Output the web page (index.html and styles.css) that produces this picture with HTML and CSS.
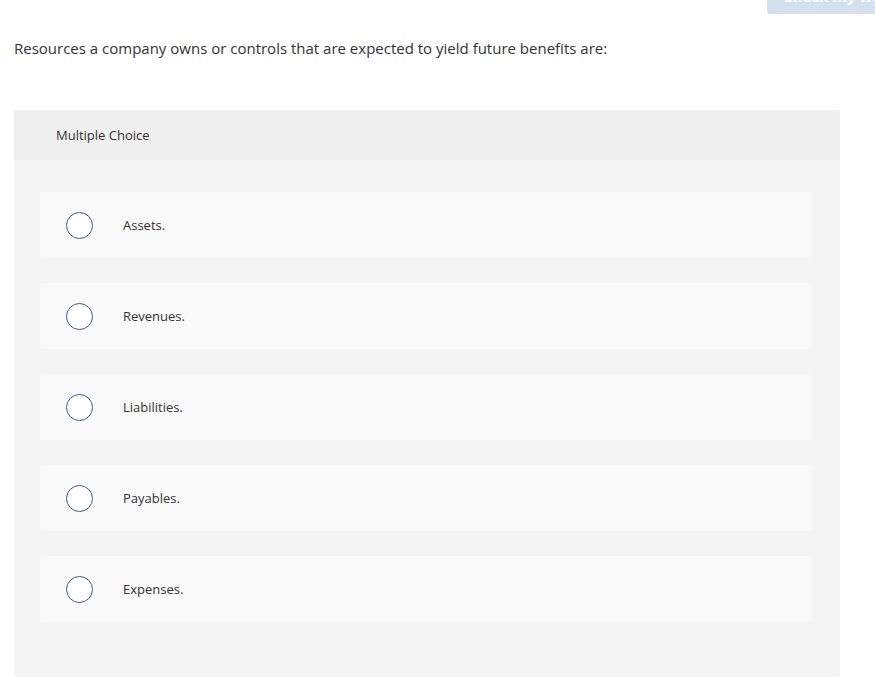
FILE: index.html
```html
<!DOCTYPE html>
<html>
<head>
<meta charset="utf-8">
<link rel="stylesheet" href="styles.css">
</head>
<body>
<div class="topbar"><button class="check-btn">Check my work</button></div>
<p class="question">Resources a company owns or controls that are expected to yield future benefits are:</p>
<div class="panel">
  <div class="panel-head">Multiple Choice</div>
  <div class="options">
    <label class="option"><span class="radio"></span><span class="label">Assets.</span></label>
    <label class="option"><span class="radio"></span><span class="label">Revenues.</span></label>
    <label class="option"><span class="radio"></span><span class="label">Liabilities.</span></label>
    <label class="option"><span class="radio"></span><span class="label">Payables.</span></label>
    <label class="option"><span class="radio"></span><span class="label">Expenses.</span></label>
  </div>
</div>
</body>
</html>
```
FILE: styles.css
```css
html, body { margin: 0; padding: 0; background: #fff; }
body { font-family: "Open Sans", "Liberation Sans", sans-serif; color: #333; width: 875px; height: 695px; overflow: hidden; }
.topbar { height: 0; display: flex; justify-content: flex-end; }
.check-btn {
  margin-top: -22px; margin-right: -20px; height: 36px; width: 128px;
  background: #d4e0ee; border: none; border-radius: 4px; color: #fff;
  font-family: "Open Sans", sans-serif; font-weight: 700; font-size: 15px; line-height: 18px;
  display: flex; align-items: flex-end; justify-content: flex-start; padding: 0 0 9px 16px; box-sizing: border-box;
  white-space: nowrap;
}
.question { margin: 0; padding: 38px 0 0 14px; font-size: 15px; line-height: 20px; }
.panel { margin: 52px 0 0 14px; width: 826px; height: 567px; background: #f4f4f4; border-radius: 3px; overflow: hidden; }
.panel-head { height: 50px; background: #f0f0f0; display: flex; align-items: center; padding-left: 42px; font-size: 13px; color: #333; }
.options { display: flex; flex-direction: column; gap: 25px; padding: 32px 28px 0 26px; }
.option { height: 66px; background: #f9f9f9; border-radius: 3px; display: flex; align-items: center; padding-left: 26px; }
.radio { width: 25px; height: 25px; border: 1.6px solid #2b5f93; border-radius: 50%; background: #fff; flex: none; }
.label { margin-left: 30px; font-size: 13px; color: #333; }
```
